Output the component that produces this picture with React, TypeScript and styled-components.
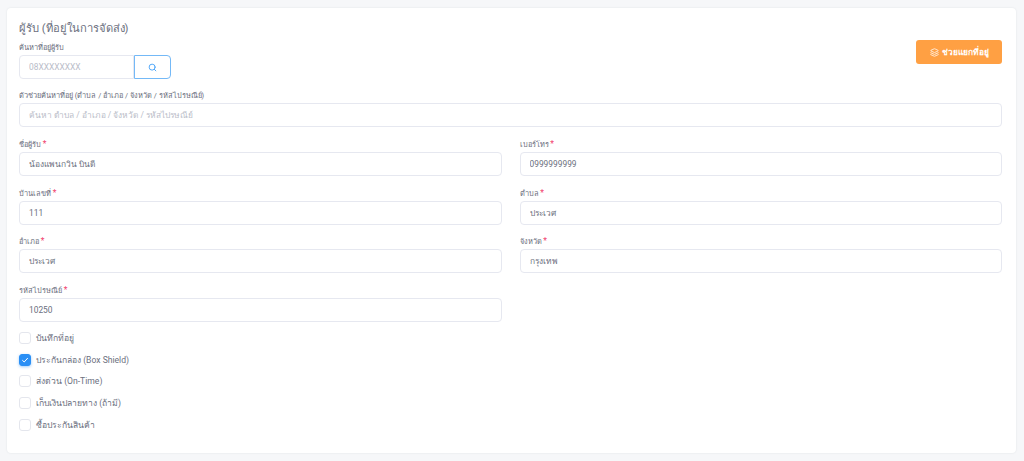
import React from "react";
import styled, { createGlobalStyle } from "styled-components";
import { LuLayers, LuSearch } from "react-icons/lu";

const GlobalStyle = createGlobalStyle`
  html, body {
    margin: 0;
    background: #f6f7f9;
    font-family: "Roboto", "Noto Sans", "Noto Sans CJK SC", sans-serif;
  }
  * { box-sizing: border-box; }
`;

const Page = styled.div`
  width: 1024px;
  height: 461px;
  padding: 8px 8px 8px 7px;
  overflow: hidden;
`;

const Card = styled.section`
  height: 445px;
  background: #fff;
  border-radius: 4px;
  box-shadow: 0 0 2px rgba(60, 70, 90, 0.12);
  padding: 12px 14px 0 12px;
`;

const Header = styled.div`
  display: flex;
  justify-content: space-between;
  align-items: flex-end;
  height: 59px;
`;

const Title = styled.h2`
  margin: 0;
  height: 22px;
  font-size: 11.2px;
  line-height: 19px;
  font-weight: 400;
  color: #6c7080;
`;

const FieldLabel = styled.label`
  display: block;
  height: 14px;
  font-size: 7.4px;
  line-height: 13px;
  color: #6a6e7d;
`;

const Star = styled.span`
  color: #f1416c;
  font-size: 8.5px;
`;

const SearchRow = styled.div`
  display: flex;
  width: 152px;
`;

const Input = styled.input<{ $joined?: boolean }>`
  display: block;
  width: 100%;
  height: 24px;
  padding: 0 9px;
  font: inherit;
  font-size: 8.4px;
  color: #6c7080;
  background: #fff;
  border: 1px solid #e6e8f0;
  border-radius: ${(p) => (p.$joined ? "4px 0 0 4px" : "4px")};
  outline: none;
  &::placeholder {
    color: #b9bcc8;
  }
`;

const SearchButton = styled.button`
  flex: 0 0 37px;
  height: 24px;
  padding: 0;
  display: flex;
  align-items: center;
  justify-content: center;
  background: #fff;
  color: #4aa3f8;
  border: 1px solid #74b9f7;
  border-radius: 0 4px 4px 0;
`;

const HelperButton = styled.button`
  width: 86px;
  height: 24px;
  margin-bottom: 15px;
  display: flex;
  align-items: center;
  justify-content: center;
  gap: 3px;
  font: inherit;
  font-size: 8.4px;
  font-weight: 700;
  color: #fff;
  background: #ffa043;
  border: none;
  border-radius: 3px;
`;

const FullField = styled.div`
  margin-top: 10px;
  margin-bottom: 11px;
`;

const Grid = styled.div`
  display: grid;
  grid-template-columns: 1fr 1fr;
  column-gap: 18px;
  row-gap: 10.7px;
`;

const Checks = styled.div`
  margin-top: 5px;
  display: flex;
  flex-direction: column;
`;

const CheckRow = styled.label`
  display: flex;
  align-items: center;
  gap: 5px;
  height: 21.7px;
  font-size: 8.6px;
  color: #6c7080;
`;

const Box = styled.span<{ $on?: boolean }>`
  flex: 0 0 12px;
  width: 12px;
  height: 12px;
  display: flex;
  align-items: center;
  justify-content: center;
  border-radius: 3px;
  background: ${(p) => (p.$on ? "#2a8ff5" : "#fff")};
  border: 1px solid ${(p) => (p.$on ? "#2a8ff5" : "#e4e6ed")};
  box-shadow: ${(p) => (p.$on ? "0 1px 3px rgba(42,143,245,.45)" : "none")};
`;

const fields = [
  ["ชื่อผู้รับ", "น้องแพนกวิน บินดี"],
  ["เบอร์โทร", "0999999999"],
  ["บ้านเลขที่", "111"],
  ["ตำบล", "ประเวศ"],
  ["อำเภอ", "ประเวศ"],
  ["จังหวัด", "กรุงเทพ"],
  ["รหัสไปรษณีย์", "10250"],
];

const checks = [
  { label: "บันทึกที่อยู่" },
  { label: "ประกันกล่อง (Box Shield)", on: true },
  { label: "ส่งด่วน (On-Time)" },
  { label: "เก็บเงินปลายทาง (ถ้ามี)" },
  { label: "ซื้อประกันสินค้า" },
];

export default function App() {
  return (
    <Page>
      <GlobalStyle />
      <Card>
        <Header>
          <div>
            <Title>ผู้รับ (ที่อยู่ในการจัดส่ง)</Title>
            <FieldLabel>ค้นหาที่อยู่ผู้รับ</FieldLabel>
            <SearchRow>
              <Input $joined placeholder="08XXXXXXXX" />
              <SearchButton>
                <LuSearch size={9} strokeWidth={2.5} />
              </SearchButton>
            </SearchRow>
          </div>
          <HelperButton>
            <LuLayers size={9} />
            ช่วยแยกที่อยู่
          </HelperButton>
        </Header>
        <FullField>
          <FieldLabel>ตัวช่วยค้นหาที่อยู่ (ตำบล / อำเภอ / จังหวัด / รหัสไปรษณีย์)</FieldLabel>
          <Input placeholder="ค้นหา ตำบล / อำเภอ / จังหวัด / รหัสไปรษณีย์" />
        </FullField>
        <Grid>
          {fields.map(([label, value]) => (
            <div key={label}>
              <FieldLabel>
                {label} <Star>*</Star>
              </FieldLabel>
              <Input defaultValue={value} />
            </div>
          ))}
        </Grid>
        <Checks>
          {checks.map((c) => (
            <CheckRow key={c.label}>
              <Box $on={c.on}>
                {c.on && (
                  <svg width="8" height="8" viewBox="0 0 8 8" fill="none">
                    <path d="M1.3 4.2 3.2 6 6.8 2" stroke="#fff" strokeWidth="1" />
                  </svg>
                )}
              </Box>
              {c.label}
            </CheckRow>
          ))}
        </Checks>
      </Card>
    </Page>
  );
}
